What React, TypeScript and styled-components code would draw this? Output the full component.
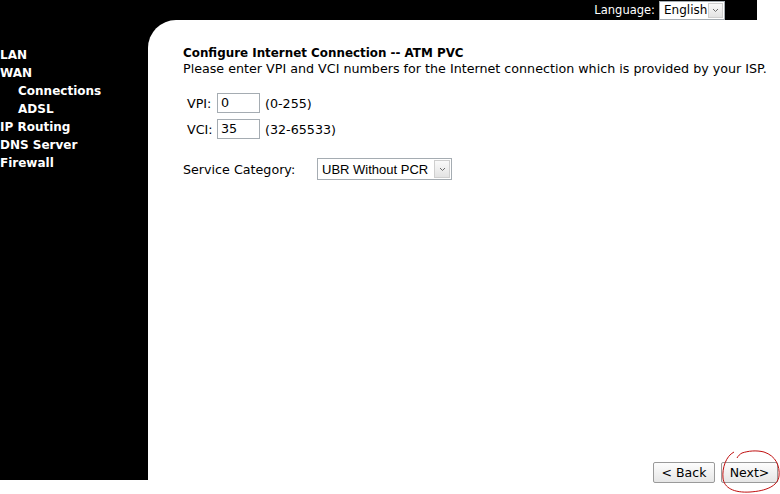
import React from "react";
import styled, { createGlobalStyle } from "styled-components";

const Global = createGlobalStyle`
  html, body { margin: 0; padding: 0; background: #fff; }
  body { font-family: "DejaVu Sans", Verdana, sans-serif; }
`;

const Page = styled.div`
  width: 780px;
  height: 494px;
  display: flex;
  flex-direction: column;
  overflow: hidden;
`;

const TopBar = styled.div`
  width: 757px;
  height: 20px;
  background: #000;
  display: flex;
  justify-content: flex-end;
  align-items: center;
  gap: 4px;
  padding-right: 32px;
  box-sizing: border-box;
`;

const LangLabel = styled.span`
  color: #fff;
  font-size: 11.5px;
`;

const Main = styled.div`
  flex: 1;
  display: flex;
  background: linear-gradient(#000, #000) no-repeat 0 0 / 220px 60px, #fff;
`;

const Sidebar = styled.nav`
  width: 148px;
  height: 460px;
  background: #000;
  padding-top: 26px;
  box-sizing: border-box;
  display: flex;
  flex-direction: column;
`;

const NavItem = styled.div<{ $indent?: boolean }>`
  color: #fff;
  font-weight: bold;
  font-size: 12px;
  line-height: 18px;
  padding-left: ${(p) => (p.$indent ? "18px" : "0")};
  white-space: nowrap;
`;

const Content = styled.div`
  flex: 1;
  background: #fff;
  border-top-left-radius: 28px;
  padding: 25px 2px 11px 35px;
  display: flex;
  flex-direction: column;
  position: relative;
`;

const Title = styled.div`
  font-weight: bold;
  font-size: 11.9px;
  line-height: 15px;
  padding-top: 1px;
  color: #000;
`;

const Desc = styled.div`
  font-size: 12.7px;
  line-height: 15px;
  color: #000;
  white-space: nowrap;
`;

const Fields = styled.div`
  margin-top: 17px;
  display: flex;
  flex-direction: column;
  gap: 6px;
  padding-left: 4px;
`;

const FieldRow = styled.div`
  display: flex;
  align-items: center;
  gap: 4px;
  font-size: 12.7px;
  height: 20px;
`;

const FieldLabel = styled.span`
  width: 26px;
`;

const TextBox = styled.div`
  width: 38px;
  height: 18px;
  border: 1px solid #a5acb2;
  font-size: 12.7px;
  line-height: 18px;
  padding-left: 3px;
  box-sizing: content-box;
  margin-right: 1px;
`;

const ServiceRow = styled.div`
  margin-top: 19px;
  display: flex;
  align-items: center;
  font-size: 12.7px;
`;

const ServiceLabel = styled.span`
  width: 134px;
`;

const Select = styled.div<{ $w: number; $h: number; $fs: number; $sans?: boolean }>`
  width: ${(p) => p.$w}px;
  height: ${(p) => p.$h}px;
  border: 1px solid #a5acb2;
  display: flex;
  align-items: stretch;
  background: #fff;
  box-sizing: border-box;
  white-space: nowrap;
  font-family: ${(p) => (p.$sans ? '"Liberation Sans", Arial, sans-serif' : '"DejaVu Sans", Verdana, sans-serif')};
  font-size: ${(p) => p.$fs}px;
`;

const SelectText = styled.span`
  flex: 1;
  padding-left: 4px;
  display: flex;
  align-items: center;
  color: #000;
`;

const Arrow = styled.span`
  width: 14px;
  margin: 1px;
  background: linear-gradient(#fafafa, #e3e3e3);
  border: 1px solid #cfcfcf;
  display: flex;
  align-items: center;
  justify-content: center;
`;

const Buttons = styled.div`
  margin-top: auto;
  display: flex;
  justify-content: flex-end;
  gap: 6px;
`;

const Button = styled.button<{ $w: number }>`
  width: ${(p) => p.$w}px;
  height: 21px;
  border: 1px solid #9a9a9a;
  border-radius: 2px;
  background: linear-gradient(#fdfdfd, #e6e6e6);
  font-family: "DejaVu Sans", Verdana, sans-serif;
  font-size: 12.5px;
  color: #000;
  padding: 0;
`;

const Circle = styled.svg`
  position: absolute;
  right: -2px;
  bottom: 0;
`;

const ArrowIcon = () => (
  <svg width="7" height="5" viewBox="0 0 7 5">
    <path d="M1 1 L3.5 3.5 L6 1" fill="none" stroke="#6b6b6b" strokeWidth="1" />
  </svg>
);

export default function App() {
  return (
    <Page>
      <Global />
      <TopBar>
        <LangLabel>Language:</LangLabel>
        <Select $w={66} $h={19} $fs={12}>
          <SelectText>English</SelectText>
          <Arrow>
            <ArrowIcon />
          </Arrow>
        </Select>
      </TopBar>
      <Main>
        <Sidebar>
          <NavItem>LAN</NavItem>
          <NavItem>WAN</NavItem>
          <NavItem $indent>Connections</NavItem>
          <NavItem $indent>ADSL</NavItem>
          <NavItem>IP Routing</NavItem>
          <NavItem>DNS Server</NavItem>
          <NavItem>Firewall</NavItem>
        </Sidebar>
        <Content>
          <Title>Configure Internet Connection -- ATM PVC</Title>
          <Desc>Please enter VPI and VCI numbers for the Internet connection which is provided by your ISP.</Desc>
          <Fields>
            <FieldRow>
              <FieldLabel>VPI:</FieldLabel>
              <TextBox>0</TextBox>
              <span>(0-255)</span>
            </FieldRow>
            <FieldRow>
              <FieldLabel>VCI:</FieldLabel>
              <TextBox>35</TextBox>
              <span>(32-65533)</span>
            </FieldRow>
          </Fields>
          <ServiceRow>
            <ServiceLabel>Service Category:</ServiceLabel>
            <Select $w={135} $h={22} $fs={13} $sans>
              <SelectText>UBR Without PCR</SelectText>
              <Arrow>
                <ArrowIcon />
              </Arrow>
            </Select>
          </ServiceRow>
          <Buttons>
            <Button $w={62}>&lt; Back</Button>
            <Button $w={57}>Next&gt;</Button>
          </Buttons>
          <Circle width="62" height="46" viewBox="0 0 62 46">
            <path
              d="M14 4 C6 8 2 20 3 30 C4 40 14 45 30 44 C46 43 58 38 59 28 C60 18 56 8 44 4 C36 2 28 3 22 5 C20 6 18 8 17 10"
              fill="none"
              stroke="#c01010"
              strokeWidth="1"
            />
          </Circle>
        </Content>
      </Main>
    </Page>
  );
}
